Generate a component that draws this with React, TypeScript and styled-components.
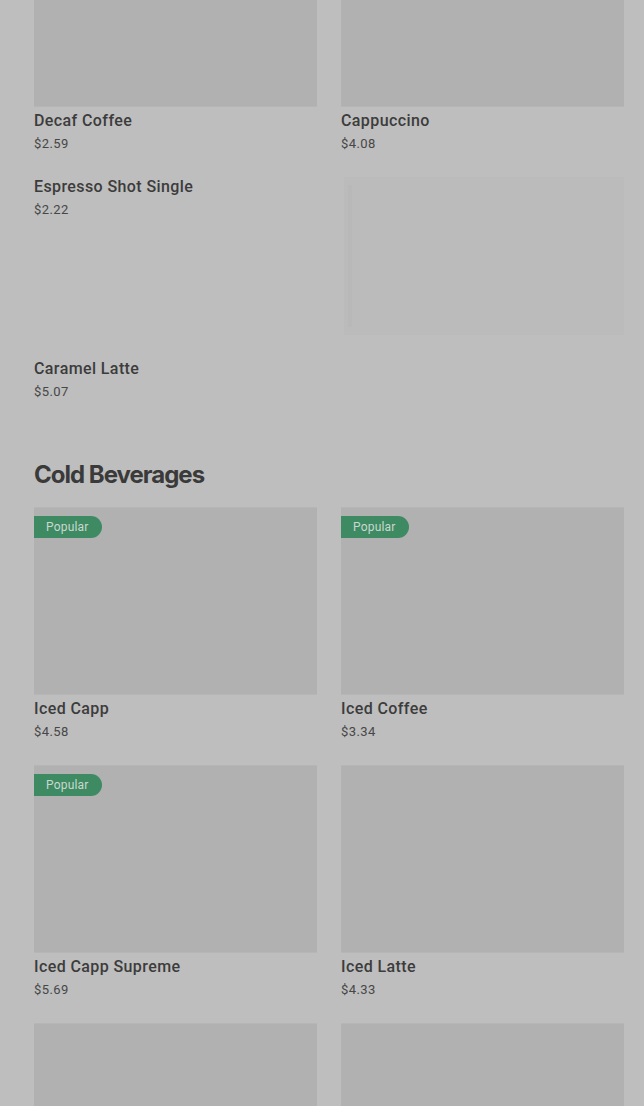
import React from "react";
import styled, { createGlobalStyle } from "styled-components";

const Global = createGlobalStyle`
  html, body { margin: 0; padding: 0; background: #bebebe; overflow: hidden; }
  body { font-family: Roboto, "Noto Sans", Arial, sans-serif; }
`;

const Viewport = styled.div`
  width: 644px;
  height: 1106px;
  overflow: hidden;
`;

const Page = styled.div`
  width: 644px;
  background: #bebebe;
  box-sizing: border-box;
  padding: 0 20px 0 34px;
  margin-top: -81px;
`;

const Grid = styled.div`
  display: grid;
  grid-template-columns: 283px 283px;
  column-gap: 24px;
  row-gap: 24px;
  align-items: start;
`;

const Card = styled.div`
  display: flex;
  flex-direction: column;
`;

const ImageBox = styled.div`
  position: relative;
  height: 188px;
  background: #b1b1b1;
  box-shadow: inset 0 1px 0 #b6b6b6, inset 0 -1px 0 #b6b6b6;
`;

const FaintImage = styled.div`
  position: relative;
  height: 158px;
  margin: 0 0 0 3px;
  background: #bbbbbb;
  &::before {
    content: "";
    position: absolute;
    left: 4px;
    top: 8px;
    bottom: 8px;
    width: 4px;
    background: #b8b8b8;
  }
`;

const Badge = styled.span`
  position: absolute;
  left: 0;
  top: 9px;
  height: 22px;
  padding: 0 13px 0 12px;
  display: flex;
  align-items: center;
  background: #3e8a63;
  color: #c9d8cf;
  font-family: Roboto, Arial, sans-serif;
  font-size: 12px;
  letter-spacing: 0.2px;
  border-radius: 0 11px 11px 0;
`;

const Title = styled.div<{ $first?: boolean }>`
  margin-top: ${(p) => (p.$first ? "0" : "4px")};
  font-size: 16px;
  line-height: 20px;
  font-weight: 500;
  color: #3c3c3c;
  letter-spacing: 0.4px;
`;

const Price = styled.div`
  margin-top: 4px;
  font-size: 13px;
  line-height: 18px;
  color: #474747;
  letter-spacing: 0.4px;
`;

const Heading = styled.h2`
  margin: 58px 0 16px;
  font-family: Inter, "Noto Sans", sans-serif;
  font-size: 24px;
  line-height: 32px;
  font-weight: 700;
  letter-spacing: -1px;
  color: #3a3a3a;
`;

type Item = { name: string; price: string; popular?: boolean; image?: boolean };

const ProductCard: React.FC<{ item: Item }> = ({ item }) => (
  <Card>
    {item.image !== false && (
      <ImageBox>{item.popular && <Badge>Popular</Badge>}</ImageBox>
    )}
    <Title $first={item.image === false}>{item.name}</Title>
    <Price>{item.price}</Price>
  </Card>
);

const cold: Item[] = [
  { name: "Iced Capp", price: "$4.58", popular: true },
  { name: "Iced Coffee", price: "$3.34", popular: true },
  { name: "Iced Capp Supreme", price: "$5.69", popular: true },
  { name: "Iced Latte", price: "$4.33" },
];

const Placeholder = styled.div`
  height: 188px;
  background: #b1b1b1;
  box-shadow: inset 0 1px 0 #b6b6b6;
`;

export default function App() {
  return (
    <Viewport>
      <Global />
      <Page>
        <Grid>
          <ProductCard item={{ name: "Decaf Coffee", price: "$2.59" }} />
          <ProductCard item={{ name: "Cappuccino", price: "$4.08" }} />
          <ProductCard item={{ name: "Espresso Shot Single", price: "$2.22", image: false }} />
          <FaintImage />
          <ProductCard item={{ name: "Caramel Latte", price: "$5.07", image: false }} />
        </Grid>
        <Heading>Cold Beverages</Heading>
        <Grid>
          {cold.map((c) => (
            <ProductCard key={c.name} item={c} />
          ))}
          <Placeholder />
          <Placeholder />
        </Grid>
      </Page>
    </Viewport>
  );
}
